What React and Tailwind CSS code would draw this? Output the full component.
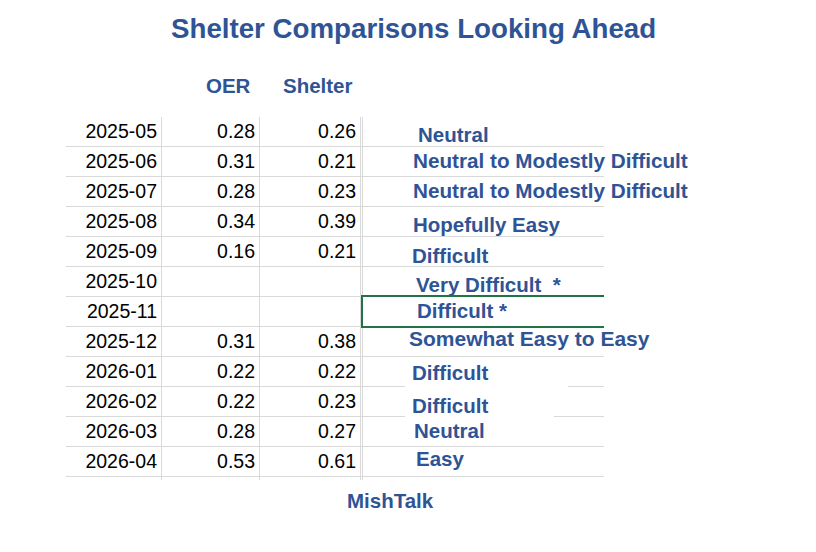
import React from 'react';

const rows = [
  { m: '2025-05', oer: '0.28', sh: '0.26', label: 'Neutral', top: 8, left: 55 },
  { m: '2025-06', oer: '0.31', sh: '0.21', label: 'Neutral to Modestly Difficult', top: 4, left: 50, size: 20.7 },
  { m: '2025-07', oer: '0.28', sh: '0.23', label: 'Neutral to Modestly Difficult', top: 4, left: 50, size: 20.7 },
  { m: '2025-08', oer: '0.34', sh: '0.39', label: 'Hopefully Easy', top: 8, left: 50 },
  { m: '2025-09', oer: '0.16', sh: '0.21', label: 'Difficult', top: 9, left: 49 },
  { m: '2025-10', oer: '', sh: '', label: 'Very Difficult\u00a0\u00a0*', top: 8, left: 53 },
  { m: '2025-11', oer: '', sh: '', label: 'Difficult *', top: 4, left: 54, selected: true },
  { m: '2025-12', oer: '0.31', sh: '0.38', label: 'Somewhat Easy to Easy', top: 1, left: 46, size: 21 },
  { m: '2026-01', oer: '0.22', sh: '0.22', label: 'Difficult', top: 6, left: 49, cover: 163, coverH: 25 },
  { m: '2026-02', oer: '0.22', sh: '0.23', label: 'Difficult', top: 9, left: 49, cover: 149, coverH: 22 },
  { m: '2026-03', oer: '0.28', sh: '0.27', label: 'Neutral', top: 4, left: 51 },
  { m: '2026-04', oer: '0.53', sh: '0.61', label: 'Easy', top: 2, left: 53 },
];

const font = { fontFamily: '"Liberation Sans", Arial, sans-serif' };

const Label = ({ r }) => {
  if (r.cover) {
    return (
      <div
        className="absolute bg-white left-[42px] pl-[7px]"
        style={{ top: r.top, width: r.cover, height: r.coverH }}
      >
        <span className="block whitespace-nowrap text-[20.5px] leading-none font-bold text-[#2f5496]">{r.label}</span>
      </div>
    );
  }
  return (
    <span
      className="absolute whitespace-nowrap text-[20.5px] leading-none font-bold text-[#2f5496]"
      style={{ top: r.top, left: r.left, fontSize: r.size }}
    >
      {r.label}
    </span>
  );
};

export default function App() {
  return (
    <div className="w-[816px] h-[552px] bg-white overflow-hidden" style={font}>
      <div className="h-[57px] leading-[57px] pl-[171px] text-[27.7px] font-bold text-[#2f5496] whitespace-nowrap">
        Shelter Comparisons Looking Ahead
      </div>

      <div className="ml-[66px] flex h-[60px] leading-[58px] text-[20.5px] font-bold text-[#2f5496]">
        <div className="w-[96px]"></div>
        <div className="w-[98px] pl-[44px]">OER</div>
        <div className="w-[103px] pl-[23px]">Shelter</div>
      </div>

      <div className="ml-[66px] w-[538px] text-[19.5px] leading-[29px] text-black">
        {rows.map((r) => (
          <div key={r.m} className="flex h-[30px]">
            <div className="w-[96px] border-r border-b border-[#d9d9d9] text-right pr-[4px]">{r.m}</div>
            <div className="w-[98px] border-r border-b border-[#d9d9d9] text-right pr-[4px]">{r.oer}</div>
            <div className="w-[103px] border-r-[3px] border-double border-b border-[#d9d9d9] text-right pr-[4px]">{r.sh}</div>
            <div className="flex-1 border-b border-[#d9d9d9] relative">
              <Label r={r} />
              {r.selected && (
                <div className="absolute top-[-2px] left-[-2px] w-[243px] h-[33px] border-2 border-r-0 border-[#217346]"></div>
              )}
            </div>
          </div>
        ))}
        <div className="flex h-[3px]">
          <div className="w-[96px] border-r border-[#d9d9d9]"></div>
          <div className="w-[98px] border-r border-[#d9d9d9]"></div>
          <div className="w-[103px] border-r-[3px] border-double border-[#d9d9d9]"></div>
        </div>
      </div>

      <div className="h-[42px] leading-[42px] pl-[347px] text-[20.5px] font-bold text-[#2f5496]">MishTalk</div>
    </div>
  );
}
